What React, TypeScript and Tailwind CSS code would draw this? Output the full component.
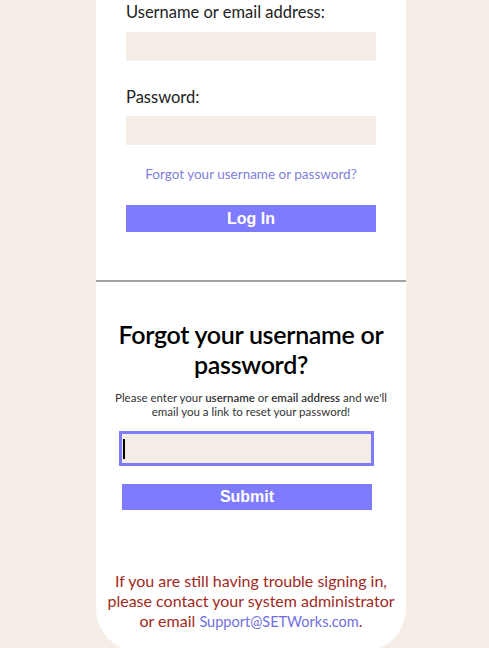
export default function App() {
  return (
    <div className="min-h-screen bg-[#f5eee7] font-['Lato','Noto_Sans',sans-serif]">
      <div className="ml-[96px] w-[310px] bg-white rounded-b-[44px] pb-[20px]">
        {/* login form */}
        <div className="px-[30px] pt-[2px]">
          <label className="block text-[16.5px] leading-[20px] text-[#222]">Username or email address:</label>
          <div className="mt-[10px] h-[29px] w-[250px] bg-[#f4ede6]" />
          <label className="mt-[26px] block text-[16.5px] leading-[20px] text-[#222]">Password:</label>
          <div className="mt-[9px] h-[29px] w-[250px] bg-[#f4ede6]" />
          <p className="mt-[20px] text-center text-[13.5px] leading-[18px] text-[#7f7fe0]">
            Forgot your username or password?
          </p>
          <button className="mt-[22px] block h-[27px] w-[250px] bg-[#7f7bff] text-[16px] font-bold text-white font-['Liberation_Sans',Arial,sans-serif]">
            Log In
          </button>
        </div>

        <div className="mt-[48px] h-[2px] bg-[#a3a3a3]" />

        {/* forgot section */}
        <div className="px-[18px] pt-[37px] text-center">
          <h2 className="-mx-[10px] text-[25px] leading-[30px] font-semibold text-black tracking-[-0.3px]">
            Forgot your username or password?
          </h2>
          <p className="mt-[12px] -mx-[4px] text-[11.5px] leading-[14px] text-[#333]">
            Please enter your <b className="font-semibold">username</b> or <b className="font-semibold">email address</b> and we'll email you a link to reset your password!
          </p>
          <div className="mt-[12px] ml-[5px] flex h-[35px] w-[255px] items-center border-[3px] border-[#7f7bff] bg-[#f4ede6] pl-[1px]">
            <span className="h-[20px] w-[2px] bg-black" />
          </div>
          <button className="ml-[8px] mt-[18px] block h-[26px] w-[250px] bg-[#7f7bff] text-[16px] font-bold text-white font-['Liberation_Sans',Arial,sans-serif]">
            Submit
          </button>
          <p className="mt-[61px] -mx-[12px] text-[16px] leading-[20px] text-[#a02a1c]">
            If you are still having trouble signing in, please contact your system administrator or email{" "}
            <a className="text-[14.5px] text-[#6f6fe0]">Support@SETWorks.com</a>.
          </p>
        </div>
      </div>
    </div>
  );
}
